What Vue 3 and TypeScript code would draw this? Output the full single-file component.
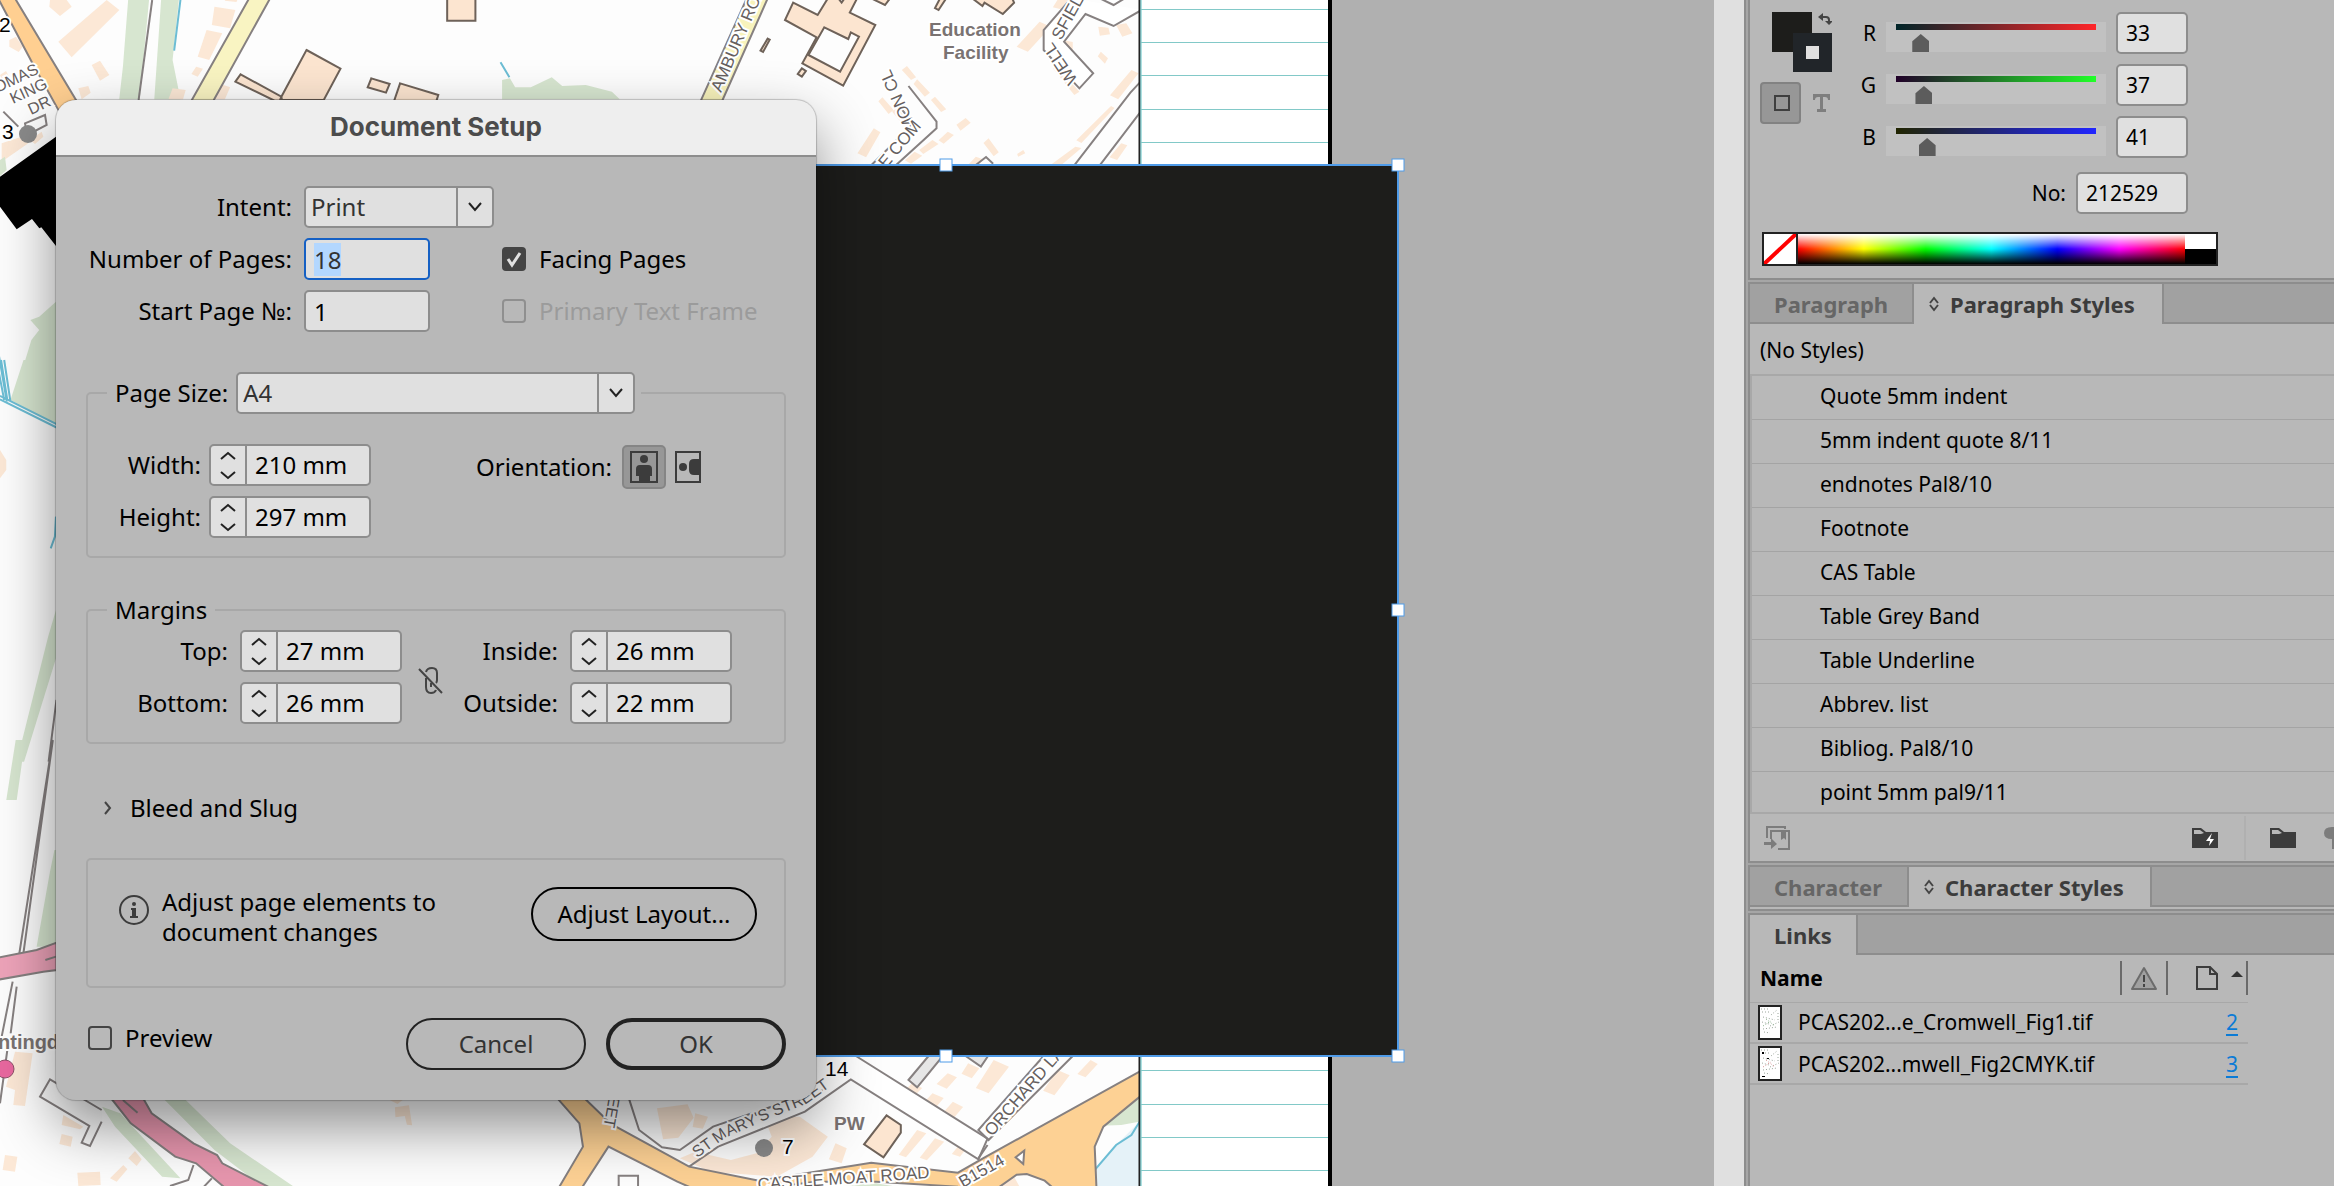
<script setup lang="ts">
import { onMounted, ref } from 'vue'

interface Channel { name: string; value: number; from: string; to: string }
interface Label { text: string; x: number; y: number; angle: number; size: number; bold?: boolean; dark?: boolean }

const channels = ref<Channel[]>([
  { name: 'R', value: 33, from: '#002529', to: '#ff2529' },
  { name: 'G', value: 37, from: '#210029', to: '#21ff29' },
  { name: 'B', value: 41, from: '#212500', to: '#2125ff' },
])

const paragraphStyles = [
  'Quote 5mm indent', '5mm indent quote 8/11', 'endnotes Pal8/10', 'Footnote', 'CAS Table',
  'Table Grey Band', 'Table Underline', 'Abbrev. list', 'Bibliog. Pal8/10', 'point 5mm pal9/11',
]

const links = [
  { name: 'PCAS202...e_Cromwell_Fig1.tif', page: 2 },
  { name: 'PCAS202...mwell_Fig2CMYK.tif', page: 3 },
]

const size = ref([
  { id: 'width', label: 'Width:', value: '210 mm' },
  { id: 'height', label: 'Height:', value: '297 mm' },
])
const margins = ref([
  [
    { id: 'top', label: 'Top:', value: '27 mm' },
    { id: 'bottom', label: 'Bottom:', value: '26 mm' },
  ],
  [
    { id: 'inside', label: 'Inside:', value: '26 mm' },
    { id: 'outside', label: 'Outside:', value: '22 mm' },
  ],
])

const baselines = Array.from({ length: 36 }, (_, i) => 9 + Math.round((i * 1161) / 35))

const handles = [
  { x: 946, y: 165 }, { x: 1398, y: 165 }, { x: 1398, y: 610 }, { x: 946, y: 1056 }, { x: 1398, y: 1056 },
]

const labels: Label[] = [
  { text: 'AMBURY ROAD', x: 721, y: 93, angle: -67, size: 17 },
  { text: 'Education', x: 929, y: 36, angle: 0, size: 19, bold: true },
  { text: 'Facility', x: 943, y: 59, angle: 0, size: 19, bold: true },
  { text: 'WELL', x: 1078, y: 80, angle: -124, size: 17 },
  { text: 'SFIELD', x: 1061, y: 41, angle: -61, size: 17 },
  { text: 'MON CL', x: 917, y: 129, angle: -114, size: 17 },
  { text: 'E COM', x: 886, y: 169, angle: -50, size: 17 },
  { text: 'OMAS', x: -3, y: 93, angle: -25, size: 16 },
  { text: 'KING', x: 13, y: 104, angle: -25, size: 16 },
  { text: 'DR', x: 31, y: 115, angle: -25, size: 16 },
  { text: '2', x: -1, y: 32, angle: 0, size: 21, dark: true },
  { text: '3', x: 2, y: 139, angle: 0, size: 21, dark: true },
  { text: 'ntingd', x: -2, y: 1049, angle: 0, size: 20, bold: true },
  { text: 'EET', x: 609, y: 1096, angle: 100, size: 16 },
  { text: '14', x: 825, y: 1076, angle: 0, size: 21, dark: true },
  { text: '7', x: 782, y: 1154, angle: 0, size: 21, dark: true },
  { text: 'PW', x: 834, y: 1130, angle: 0, size: 19, bold: true },
  { text: 'CASTLE MOAT ROAD', x: 758, y: 1190, angle: -4, size: 17 },
  { text: 'ORCHARD LA', x: 992, y: 1137, angle: -49, size: 17 },
  { text: 'B1514', x: 963, y: 1188, angle: -30, size: 17 },
]

const pagesField = ref<HTMLInputElement | null>(null)
const pages = ref('18')
const startPage = ref('1')
const hex = ref('212529')

onMounted(() => {
  pagesField.value?.focus()
  pagesField.value?.select()
})
</script>

<template>
  <div class="app">
    <main class="canvas">
      <svg class="artboard" width="1714" height="1186" viewBox="0 0 1714 1186" aria-label="Town map">
        <defs>
          <clipPath id="mapClip"><rect width="1139" height="1186" /></clipPath>
          <path id="stMarys" d="M697 1158 725 1138 770 1118 806 1104 842 1078" />
        </defs>
        <rect width="1328" height="1186" fill="#fff" />
        <g clip-path="url(#mapClip)" class="map">
          <rect width="1139" height="1186" fill="#fdfdfd" />

          <!-- north west -->
          <g transform="scale(.33333)">
            <path class="b" d="M150 0h50l15 20-35 28-32-28zM175 125 320 0l38 30-143 142zM275 195l25-13 28 43-28 17zM235 265l30-7 7 20-27 20zM28 120l20-10 20 30-12 16-28-16zM5 430l60-20 20 20-80 55zM90 420l35-25 5 15-25 22zM0 225l18-12 10 18-20 14z" />
            <path class="g" d="M0 480l15-10 5 40-20 18z" />
            <path class="r" fill="#ffcf91" d="M-40-70-10-110 48 0l180 300-50 35L95 185z" />
            <path class="l" d="M75 370l60-25 5 30-58 30zM10 335l45 45" />
            <path d="M0 530 168 410v328l-44-56-6 3-22-28-46 31L0 620z" />
          </g>
          <g transform="scale(.52301 .33333)">
            <path class="g" d="M245 0h40l-18 298h-39l7-98zM308 0h34l-12 180 15 118h-50zM960 240l15-5 10 27h30l40-30 20 26 45-3 50 20 15 23H960z" />
            <path class="b" d="M410 20l40 10-10 55-35-10zM395 90l30 10-25 80-22-10zM375 200l13 6-10 24-12-8zM330 265l25 5-5 28h-28zM418 250l22 12-10 36h-28zM430-20l30 0-8 26-22-4z" />
            <path class="l" d="M291 0 265 300" />
            <path class="w" d="M345 0l-12 152M957 187l17 45" />
            <path class="r" fill="#f9f4c2" d="M480-15 520-15 408 302H366z" />
            <path class="d" d="M586 150l65 56-32 94h-80l-1-10zM460 223l78 67-3 12h-10l-75-57zM710 235l35 17-7 26-35-16zM765 250l73 35-4 20h-81zM855-9h54v71h-54z" />
            <path class="g" d="M25 1200 60 1020l15-30-17-30 17-10 32-45v300z" />
            <path class="w" d="M-5 1040 13 1205M-8 1070 8 1200" />
          </g>

          <!-- west edge beside the dialog -->
          <g transform="translate(0 360) scale(.52301 .33333)">
            <path class="g" d="M45 0h70v200L20 120zM107 750 92 830 32 1205h14l65-330z" />
            <path class="w" d="M2 0l12 120M8 0l12 125M0 108l110 86M0 118l110 86M107 470l-2 60-8 35" />
            <path class="b" d="M0 270l12 30v30l-12 25z" />
            <path class="l" d="M108 1020 93 1205" />
          </g>
          <g transform="translate(0 740) scale(.52301 .33333)">
            <path class="g" d="M30 0h18L32 180H12zM104 330h8v290H70l25-220z" />
            <path class="l" d="M101 0 35 660M101 0 43 660" />
            <path class="g" d="M195 1100l35 20 115 195-35-5-90-150zM315 1080h40l85 130 120 128h-60l-90-108z" />
            <path class="b" d="M745 1080h25l-10 12zM755 1102l27-6 6 60-10-2-4-26-18 4z" />
            <path class="r" fill="#e796ae" d="M210 1070h62l18 50 80 90 45 35 10 25 100 80h-90l-60-80-40-20-85-100z" />
            <path class="l" d="M235 1080l28 38M370 1275l-10 45-35 18M405 1315l-15 25" />
          </g>
          <g transform="translate(0 880) scale(.33333)">
            <path class="r" fill="#eda3b9" d="M-5 233l115-23 60-22v82l-40 5-135 24z" />
            <path class="l" d="M168 230l-32 10M38 305 5 470M50 320 32 460M22 510 0 670" />
            <path class="b" d="M45 515l53 5-23 158-35-3 5-45-27-10zM190 705l60 35-10 8-55-13zM185 762l33 8-6 30-34-8zM15 825l37 5-7 45-37-5zM232 878l68-3 2 40-67 3zM330 895l40-40 12 13-32 37zM385 835l20-22 20 25-15 20z" />
            <path class="l" fill="#fafafa" d="M305 690 150 598l-30 52 148 88-23 50 25 10 35-73" />
          </g>

          <!-- north east -->
          <g transform="translate(560 0) scale(.5102 .33333)">
            <path class="b" d="M940 65l22 15-45 75-22-15zM975 0h25l-12 30-22-8zM1055 80l20 3 3 20-20 4zM1090 75l20-5 12 30-20 10zM1060 155l14 20-6 16-14-22zM985 120l20 6v40l15 25-14 10-20-40zM968 190l50 85-10 10-42-80zM1120 210l14 10-40 78-16-12zM1080 318l7 6-65 105-10-8zM1010 440l12 4-40 52-18-4zM1100 430l12 6-20 44-15-8zM680 198l18 34-10 8-18-30zM700 238l25 40-10 12-22-38zM735 290l22 38-10 8-20-36zM632 292l22 38-10 12-20-38zM660 322l25 48-12 5-22-40zM615 385l13 12-28 75-17-12zM795 354l10 14-20 24-8-18zM760 395l12 10-20 26-10-10zM730 420l12 12-30 30-8-12zM695 455l15 12-22 24-12-10zM840 415l20 42-10 12-20-40zM908 450l4 10-14 10-2-8zM815 470l14 8-8 18h-22z" />
            <path class="r" fill="#f8f3bc" d="M369-15H410L318 302H276z" />
            <path class="d" d="M457 8l48 37 22-55h16l9 18 8-18h24l-16 48 50 37-63 182-80-67 28-78-62-52zM407 116l4 3-13 37-5-4zM474 205l8 8-8 17-8-8zM610-5l27 20 10-20zM745-5h12l-15 35-7-6zM808-5l20 23 4-10 36 34 22-34-5-18z" />
            <path class="d hollow" d="M518 82l47 35 5-20 16 13-37 105-62-50z" />
            <path class="l" fill="#fff" d="M1002-5 948 90v60l70 115 27-45-57-95 42-83 55 36 55-48M1058-5l27 20 22-20" />
            <path class="l" d="M683 258l55 107v20L655 500M652 292l40 80-85 128M1138 245l-20 33-112 222M1138 335l-82 165M815 495l20-24 14 20" />
          </g>

          <!-- south east -->
          <g transform="translate(560 1030) scale(.5102 .33333)">
            <path class="b" d="M190 235l60-12 12 40-30 60-30 5zM265 250l25 10-10 36-20-5zM420 260l50 0 55 60-30 60-70 60-130-15-60-40 30-20 70 25 50-20 30-50-10-40zM540 340l22 15-10 45-25-12zM690 160l20 14-30 45-20-14zM730 190l22 14-24 44-24-14zM770 215l20 16-20 36-22-14zM700 300l18 10-40 72-14-8zM735 325l18 10-34 56-14-8zM790 330l14 10-20 40-16-8zM800 100l22 15-15 30-20-14zM850 90l30 20-40 80-25-16zM760 130l18 12-20 34-20-14zM975 120l24 16-30 60-22-14zM1040 90l14 12-24 40-16-10zM1025 310l14 12-45 84-14-10zM830 440l60 0 10 28h-80z" />
            <path class="g" d="M1012 240l48-40 75-55v130l-35 10-40 2zM560 468l60-8 40 10h-110z" />
            <path fill="#e5f2f8" d="M1136 275l-46 70-70 125h116z" />
            <path class="w" d="M1136 275l-16 40-30 30-70 125" />
            <path class="l" fill="#fff" d="M580 78l258 248-18 62L570 148l-90 97-170 105-57 60" />
            <path class="l" d="M135 205l20 95 45 52 35 8 65-70 95-50 120-60M99 205l-2 40" />
            <path class="r" fill="#fdd194" d="M-5 205 38 280 45 350-5 480h45L95 350l135 105 30 20h140l100-20h120l160 15 80 2 35-38 20-2 35 20 30 40h72l-4-142 17-60 175-220h-40L835 380l-55 48-170-30-220 54-137-42L100 282 48 205z" />
            <path class="l" d="M948 78 820 300l20 30 165-252M838 345l-18 40M115 470v-33h38v40" />
            <path class="l" fill="#fff" d="M910 362l-17 20 15 20z" />
            <path class="l" fill="#e6e6e6" d="M724 75h28l-52 97-17-22zM795 78l30 32 14-32" />
            <path class="d" d="M640 256l28 29v23l-34 74-38-39z" />
          </g>

          <circle cx="28" cy="134" r="9" fill="#8a8a8a" />
          <circle cx="764" cy="1148" r="9" fill="#8a8a8a" />
          <circle cx="5" cy="1069" r="9" fill="#e8689f" stroke="#8c5068" />
          <text
            v-for="l in labels"
            :key="l.text"
            :transform="`translate(${l.x} ${l.y}) rotate(${l.angle})`"
            :font-size="l.size"
            :class="['road', { bold: l.bold, dark: l.dark }]"
          >{{ l.text }}</text>
          <text class="road" font-size="16"><textPath href="#stMarys">ST MARY'S STREET</textPath></text>
        </g>
        <path d="M1139.5 0v1186" stroke="#222" stroke-width="2" />
        <path d="M1141 0v1186" stroke="#5cc3c6" stroke-width="1" />
        <path v-for="y in baselines" :key="y" :d="`M1141 ${y}.5H1328`" stroke="#82c9c8" />
        <path d="M1330 0v1186" stroke="#000" stroke-width="4" />
        <rect x="494" y="165" width="904" height="891" fill="#1d1d1b" stroke="#4f9be8" stroke-width="2" />
        <rect
          v-for="h in handles"
          :key="`${h.x}-${h.y}`"
          :x="h.x - 6"
          :y="h.y - 6"
          width="12"
          height="12"
          fill="#fff"
          stroke="#4f9be8"
        />
      </svg>

      <form class="dialog" role="dialog" aria-labelledby="dlgTitle" @submit.prevent>
        <h1 id="dlgTitle" class="dlg-title">Document Setup</h1>
        <div class="dlg-body">
          <div class="general">
            <label for="intent">Intent:</label>
            <div class="select intent">
              <select id="intent"><option>Print</option></select>
              <span class="arrow"><svg width="18" height="12" viewBox="0 0 18 12"><path d="M3 2l6 7 6-7" /></svg></span>
            </div>
            <span></span>

            <label for="pages">Number of Pages:</label>
            <input id="pages" ref="pagesField" v-model="pages" class="box focus" type="text" />
            <label class="check">
              <span class="tick"><input type="checkbox" checked /><svg width="24" height="24" viewBox="0 0 24 24"><path d="M6 12l4 6 8-12" /></svg></span>
              Facing Pages
            </label>

            <label for="start">Start Page №:</label>
            <input id="start" v-model="startPage" class="box" type="text" />
            <label class="check off"><span class="tick"><input type="checkbox" disabled /></span>Primary Text Frame</label>
          </div>

          <fieldset class="page-size">
            <legend>
              <span class="legend-row">
                <label for="psize">Page Size:</label>
                <span class="select psize">
                  <select id="psize"><option>A4</option></select>
                  <span class="arrow"><svg width="18" height="12" viewBox="0 0 18 12"><path d="M3 2l6 7 6-7" /></svg></span>
                </span>
              </span>
            </legend>
            <div class="split">
              <div class="fields narrow">
                <template v-for="f in size" :key="f.id">
                  <label :for="f.id">{{ f.label }}</label>
                  <div class="spinner">
                    <div class="steps">
                      <button type="button" :aria-label="`Increase ${f.id}`"><svg width="18" height="12" viewBox="0 0 18 12"><path d="M2 9l7-6 7 6" /></svg></button>
                      <button type="button" :aria-label="`Decrease ${f.id}`"><svg width="18" height="12" viewBox="0 0 18 12"><path d="M2 3l7 6 7-6" /></svg></button>
                    </div>
                    <input :id="f.id" v-model="f.value" type="text" />
                  </div>
                </template>
              </div>
              <div class="orient">
                <span>Orientation:</span>
                <button type="button" class="on" aria-label="Portrait">
                  <svg width="28" height="32" viewBox="0 0 28 32"><rect x="1" y="1" width="26" height="30" fill="none" stroke="#3c3c3c" stroke-width="2" /><circle cx="14" cy="8" r="4" fill="#3c3c3c" /><path d="M6 18q0-4 4-4h8q4 0 4 4v7h-2v6H9v-6H6z" fill="#3c3c3c" /></svg>
                </button>
                <button type="button" aria-label="Landscape">
                  <svg width="26" height="32" viewBox="0 0 26 32"><rect x="1" y="1" width="24" height="30" fill="none" stroke="#3c3c3c" stroke-width="2" /><circle cx="8" cy="16" r="4" fill="#3c3c3c" /><path d="M25 8h-6q-5 0-5 5v6q0 5 5 5h6z" fill="#3c3c3c" /></svg>
                </button>
              </div>
            </div>
          </fieldset>

          <fieldset class="margins">
            <legend>Margins</legend>
            <div class="split">
              <template v-for="(group, gi) in margins" :key="gi">
                <div class="fields" :class="{ right: gi === 1 }">
                  <template v-for="f in group" :key="f.id">
                    <label :for="f.id">{{ f.label }}</label>
                    <div class="spinner">
                      <div class="steps">
                        <button type="button" :aria-label="`Increase ${f.id}`"><svg width="18" height="12" viewBox="0 0 18 12"><path d="M2 9l7-6 7 6" /></svg></button>
                        <button type="button" :aria-label="`Decrease ${f.id}`"><svg width="18" height="12" viewBox="0 0 18 12"><path d="M2 3l7 6 7-6" /></svg></button>
                      </div>
                      <input :id="f.id" v-model="f.value" type="text" />
                    </div>
                  </template>
                </div>
                <button v-if="gi === 0" type="button" class="chain" aria-label="Make all settings the same">
                  <svg width="26" height="30" viewBox="0 0 26 30"><path d="M8 6q1-4 6-4 5 0 5 5v7q0 2-1 3M8 12v9q0 6 5 6 4 0 5-3M13 17v4M1 3l23 24" fill="none" stroke="#444" stroke-width="2" /></svg>
                </button>
              </template>
            </div>
          </fieldset>

          <button type="button" class="disclosure">
            <svg width="8" height="14" viewBox="0 0 8 14"><path d="M1 1l5 6-5 6" /></svg>Bleed and Slug
          </button>

          <section class="adjust">
            <svg width="32" height="32" viewBox="0 0 32 32"><circle cx="16" cy="16" r="14" fill="none" stroke="#3c3c3c" stroke-width="2" /><circle cx="16" cy="10" r="2" fill="#3c3c3c" /><path d="M13 14h5v8h2v2h-8v-2h2v-6h-1z" fill="#3c3c3c" /></svg>
            <p>Adjust page elements to<br />document changes</p>
            <button type="button" class="pill">Adjust Layout...</button>
          </section>

          <div class="actions">
            <label class="check preview"><span class="tick"><input type="checkbox" /></span>Preview</label>
            <button type="button" class="pill cancel">Cancel</button>
            <button type="submit" class="pill ok">OK</button>
          </div>
        </div>
      </form>
    </main>

    <div class="scrollbar"></div>

    <aside class="dock">
      <section class="colour">
        <div class="swatches">
          <svg width="72" height="112" viewBox="0 0 72 112" aria-hidden="true">
            <path fill="#1d1d1b" d="M12 0h40v40H12z" />
            <path fill="#212529" fill-rule="evenodd" d="M33 21h39v39H33zM46 34v13h13V34z" />
            <path fill="#e0e0e0" d="M46 34h13v13H46z" />
            <path d="M61 5h5q3 0 3 3v4" fill="none" stroke="#444" stroke-width="2" />
            <path fill="#444" d="M58 5l5-4v8zM65 9h8l-4 4z" />
            <rect x="1" y="71" width="39" height="40" rx="3" fill="#979797" stroke="#828282" stroke-width="2" />
            <rect x="15" y="84" width="14" height="14" fill="none" stroke="#3f3f3f" stroke-width="2" />
            <path fill="#7e7e7e" d="M53 82h17v6h-2q0-3-3-3h-2v12h3v3h-9v-3h3V85h-2q-3 0-3 3h-2z" />
          </svg>
        </div>
        <div class="mixer">
          <div v-for="c in channels" :key="c.name" class="channel">
            <label :for="`ch${c.name}`">{{ c.name }}</label>
            <input
              v-model.number="c.value"
              type="range"
              min="0"
              max="255"
              :aria-label="`${c.name} level`"
              :style="{ backgroundImage: `linear-gradient(90deg, ${c.from}, ${c.to})` }"
            />
            <input :id="`ch${c.name}`" v-model="c.value" class="box num" type="text" />
          </div>
          <div class="channel hexrow">
            <label for="hex">No:</label>
            <input id="hex" v-model="hex" class="box hex" type="text" />
          </div>
        </div>
        <div class="spectrum">
          <svg class="none" width="32" height="30" viewBox="0 0 32 30"><path fill="#fff" d="M0 0h32v30H0z" /><path d="M0 30 32 0" stroke="#f00" stroke-width="4" /></svg>
          <div class="rainbow"></div>
          <div class="bw"></div>
        </div>
      </section>

      <section class="panel">
        <nav class="tabs">
          <button type="button">Paragraph</button>
          <button type="button" class="active"><svg width="11" height="16" viewBox="0 0 11 16"><path d="M1 7l4-5 4 5M1 9l4 5 4-5" /></svg>Paragraph Styles</button>
        </nav>
        <div class="current">(No Styles)</div>
        <ul class="styles">
          <li v-for="s in paragraphStyles" :key="s">{{ s }}</li>
        </ul>
        <div class="tools">
          <button type="button" aria-label="Load styles"><svg width="26" height="26" viewBox="0 0 26 26"><path d="M3 13V2h18v2M7 14V6h18v18H14" fill="none" stroke="#7c7c7c" stroke-width="2" /><path d="M17 6h5v9l-2-2-3 2zM0 17h7v-4l6 6-6 5v-4H0z" fill="#7c7c7c" /></svg></button>
          <span class="grow"></span>
          <button type="button" aria-label="Style group from cloud"><svg width="26" height="20" viewBox="0 0 26 20"><path fill="#3c3c3c" d="M0 0h9l5 4h12v16H0z" /><path fill="#b8b8b8" d="M2 2h6l4 3-3 1H2z" /><path fill="#fff" d="M20 5l-6 8h4l-1 5 5-7h-4z" /></svg></button>
          <span class="sep"></span>
          <button type="button" aria-label="New style group"><svg width="26" height="20" viewBox="0 0 26 20"><path fill="#3c3c3c" d="M0 0h9l5 4h12v16H0z" /><path fill="#b8b8b8" d="M2 2h6l4 3-3 1H2z" /></svg></button>
          <span class="clip"><svg width="26" height="22" viewBox="0 0 26 22"><path fill="#7c7c7c" d="M8 0h12v22h-2V2h-3v20h-7V12Q0 12 0 6t8-6z" /></svg></span>
        </div>
      </section>

      <section class="panel closed">
        <nav class="tabs">
          <button type="button" class="char">Character</button>
          <button type="button" class="active"><svg width="11" height="16" viewBox="0 0 11 16"><path d="M1 7l4-5 4 5M1 9l4 5 4-5" /></svg>Character Styles</button>
        </nav>
      </section>

      <section class="panel last">
        <nav class="tabs"><button type="button" class="active solo">Links</button></nav>
        <table class="links">
          <thead>
            <tr>
              <th class="name">Name</th>
              <th class="status"><span><svg width="26" height="24" viewBox="0 0 26 24"><path d="M13 2 25 23H1z" fill="#a0a0a0" stroke="#6c6c6c" stroke-width="2" stroke-linejoin="round" /><path d="M13 9v7M13 18v3" stroke="#444" stroke-width="2" /></svg></span></th>
              <th class="page"><span><svg width="22" height="24" viewBox="0 0 22 24"><path d="M1 1h13l7 7v15H1zM14 1v7h7" fill="none" stroke="#3c3c3c" stroke-width="2" /></svg><svg class="asc" width="12" height="6" viewBox="0 0 12 6"><path d="M0 6l6-6 6 6z" fill="#333" /></svg></span></th>
            </tr>
          </thead>
          <tbody>
            <tr v-for="(l, i) in links" :key="l.name">
              <td class="name" colspan="2">
                <span class="file">
                  <svg width="24" height="35" viewBox="0 0 24 35">
                    <rect x="1" y="1" width="22" height="33" fill="#fff" stroke="#222" stroke-width="2" />
                    <path d="M3 4h9M4 7h7M13 10l6-5M5 12l12 3M4 17l7 2M12 21l9-4M5 24l14-2M6 27l6 1M20 8v7" stroke="#9aa59a" stroke-dasharray="1 2" fill="none" />
                    <path d="M8 14l9 7M5 21l8-5" :stroke="i ? '#d58a8a' : '#82ac86'" stroke-dasharray="1 2" />
                    <path v-if="i" d="M4 6h2v2H4zM9 12h2v1H9zM4 30h3v1H4z" />
                  </svg>
                  {{ l.name }}
                </span>
              </td>
              <td class="page"><a href="#">{{ l.page }}</a></td>
            </tr>
          </tbody>
        </table>
      </section>
    </aside>
  </div>
</template>

<style>
body { margin: 0; overflow: hidden; }
</style>

<style scoped>
* { box-sizing: border-box; }
.app { display: flex; height: 100vh; font: 24px/28px "Noto Sans", sans-serif; color: #000; background: #b0b0b0; }
button, input, select { font: inherit; color: inherit; margin: 0; padding: 0; border: 0; background: none; border-radius: 0; outline: none; }
p, ul, h1 { margin: 0; padding: 0; }
svg { display: block; flex: none; }

.canvas { flex: 1; position: relative; overflow: hidden; min-width: 0; }
.artboard { position: absolute; top: 0; left: 0; }
.map path { vector-effect: non-scaling-stroke; }
.b { fill: #fce8d6; }
.g { fill: #d7e6d0; }
.l { stroke: #868080; stroke-width: 2; }
.l:not([fill]) { fill: none; }
.r { stroke: #868080; stroke-width: 2; }
.w { stroke: #6cbdd4; stroke-width: 2; fill: none; }
.d { fill: #fce5d0; stroke: #6e6259; stroke-width: 2; }
.hollow { fill: #fdfdfd; }
.road { font-family: "Liberation Sans", sans-serif; fill: #665f5f; stroke: #fff; stroke-width: 4; paint-order: stroke; }
.road.bold { font-weight: bold; fill: #7a7372; }
.road.dark { fill: #000; }

.dialog { position: absolute; left: 56px; top: 100px; width: 760px; border-radius: 20px; overflow: hidden; background: #b8b8b8; box-shadow: 0 0 1px 1px rgba(0, 0, 0, .2), 0 26px 60px 0 rgba(0, 0, 0, .45); }
.dlg-title { height: 57px; background: #eee; border-bottom: 2px solid #8d8d8d; font: bold 26px/54px Inter, sans-serif; color: #4c4c4c; text-align: center; }
.dlg-body { padding: 29px 30px 30px; }

.general { display: grid; grid-template-columns: 206px 190px 1fr; column-gap: 12px; row-gap: 10px; align-items: center; }
.general > label:not(.check) { text-align: right; }
.box { height: 42px; border: 2px solid #8d8d8d; border-radius: 5px; background: #e0e0e0; padding: 0 8px; }
.general .box { width: 126px; }
.box.focus { border-color: #1560c4; color: #333; }
.box::selection { background: #b3d7ff; color: #333; }
.check { display: flex; align-items: center; gap: 13px; }
.general .check { margin-left: -4px; }
.tick { display: grid; width: 24px; height: 24px; }
.tick > * { grid-area: 1 / 1; }
.tick input { appearance: none; width: 24px; height: 24px; border: 2px solid #444; border-radius: 4px; }
.tick input:checked { background: #444; }
.tick svg { fill: none; stroke: #e0e0e0; stroke-width: 3; pointer-events: none; }
.off { color: #9b9b9b; }
.off .tick input { border-color: #8f8f8f; }

.select { display: grid; height: 42px; border: 2px solid #8d8d8d; border-radius: 5px; background: #e0e0e0; }
.select > * { grid-area: 1 / 1; }
.select select { appearance: none; padding: 0 44px 0 5px; color: #333; }
.arrow { justify-self: end; width: 36px; border-left: 2px solid #8d8d8d; display: flex; align-items: center; justify-content: center; pointer-events: none; }
.arrow path, .steps path { fill: none; stroke: #222; stroke-width: 2; }
.psize { width: 399px; }

fieldset { margin: 0; min-width: 0; border: 2px solid #a8a8a8; border-radius: 5px; padding: 0 0 18px; }
.page-size { margin-top: 40px; }
.page-size legend { margin-left: 19px; padding: 0 6px 0 8px; }
.legend-row { display: flex; align-items: center; gap: 8px; }
.page-size .split { margin-top: 30px; }
.margins { margin-top: 38px; }
.margins legend { margin-left: 19px; padding: 0 8px; }
.margins .split { margin-top: 6px; }
.split { display: flex; align-items: flex-start; }
.fields { display: grid; grid-template-columns: 140px 162px; column-gap: 12px; row-gap: 10px; align-items: center; }
.fields > label { text-align: right; }
.fields.narrow { grid-template-columns: 113px 162px; column-gap: 8px; }
.fields.right { grid-template-columns: 114px 162px; }
.spinner { display: flex; height: 42px; border: 2px solid #8d8d8d; border-radius: 5px; background: #e0e0e0; overflow: hidden; }
.steps { width: 36px; border-right: 2px solid #8d8d8d; display: flex; flex-direction: column; flex: none; }
.steps button { flex: 1; display: flex; align-items: center; justify-content: center; }
.spinner input { min-width: 0; flex: 1; padding: 0 8px; }
.orient { display: flex; align-items: center; margin: 1px 0 0 auto; padding-right: 74px; }
.orient button { height: 44px; width: 44px; display: flex; align-items: center; justify-content: center; }
.orient .on { margin-left: 10px; background: #979797; border: 2px solid #858585; border-radius: 5px; }
.chain { margin: 36px 0 0 16px; width: 26px; }

.disclosure { display: flex; align-items: center; gap: 18px; margin: 50px 0 36px; padding-left: 18px; }
.disclosure path, .tabs path { fill: none; stroke: #444; stroke-width: 2; }
.adjust { display: flex; align-items: flex-start; height: 130px; padding: 27px 27px 0 30px; border: 2px solid #a8a8a8; border-radius: 5px; }
.adjust > svg { margin-top: 7px; }
.adjust p { flex: 1; margin-left: 12px; line-height: 30px; }
.pill { width: 226px; height: 54px; border: 2px solid #000; border-radius: 27px; }
.actions { display: flex; align-items: center; gap: 20px; margin-top: 30px; }
.preview { flex: 1; padding-left: 2px; margin-top: -12px; }
.actions .pill { width: 180px; height: 52px; border-color: #222; color: #333; }
.actions .ok { border-width: 4px; }

.scrollbar { width: 30px; background: #e0e0e0; }
.dock { width: 590px; flex: none; display: flex; flex-direction: column; background: #a6a6a6; border-left: 2px solid #8d8d8d; padding-left: 2px; font-size: 21px; overflow: hidden; }
.colour { background: #b8b8b8; border-left: 2px solid #8d8d8d; border-bottom: 2px solid #8d8d8d; display: grid; grid-template-columns: 136px 302px; padding: 12px 0 12px 10px; }
.mixer { display: flex; flex-direction: column; gap: 10px; margin-left: -36px; width: 338px; }
.channel { display: flex; align-items: center; height: 42px; gap: 10px; width: 328px; }
.channel label { width: 16px; text-align: right; }
.channel input[type=range] { appearance: none; width: 220px; height: 30px; margin-top: 8px; background: #c1c1c1 no-repeat 10px 2px / 200px 6px; }
.channel input[type=range]::-webkit-slider-thumb { appearance: none; width: 17px; height: 18px; margin-top: 12px; background: #5c5c5c; clip-path: polygon(50% 0, 100% 40%, 100% 100%, 0 100%, 0 40%); }
.box.num { width: 72px; }
.hexrow { justify-content: flex-end; margin-top: 4px; }
.hexrow label { width: auto; }
.box.hex { width: 112px; }
.spectrum { grid-column: 1 / -1; margin: 18px 0 0 2px; width: 456px; height: 34px; border: 2px solid #222; display: flex; }
.rainbow { flex: 1; border-left: 2px solid #222; background: linear-gradient(180deg, #fff 0, rgba(255, 255, 255, 0) 50%, rgba(0, 0, 0, 0) 50%, #000 100%), linear-gradient(90deg, #f00, #ff0 17%, #0f0 33%, #0ff 50%, #00f 67%, #f0f 83%, #f00); }
.bw { width: 31px; background: linear-gradient(#fff 50%, #000 50%); }

.panel { margin-top: 2px; border: 2px solid #8d8d8d; border-right: 0; background: #b8b8b8; }
.tabs { display: flex; background: #a1a1a1; height: 40px; box-shadow: inset 0 -2px #8d8d8d; font-weight: bold; }
.tabs button { width: 164px; padding-left: 24px; text-align: left; color: #666; border-right: 2px solid #8d8d8d; font-size: 22px; white-space: nowrap; }
.tabs button.char { width: 159px; }
.tabs .active { width: 250px; padding-left: 15px; display: flex; align-items: center; gap: 10px; background: #b8b8b8; color: #3c3c3c; }
.tabs .char + .active { width: 243px; }
.tabs .solo { width: 108px; padding-left: 24px; }
.current { height: 50px; padding: 12px 10px 0; }
.styles { list-style: none; border: 2px solid #a8a8a8; border-right: 0; height: 440px; }
.styles li { height: 44px; line-height: 40px; padding-left: 68px; border-bottom: 1px solid #a4a4a4; }
.styles li:last-child { border: 0; }
.tools { height: 47px; display: flex; align-items: center; padding-left: 14px; }
.grow { flex: 1; }
.sep { width: 2px; height: 44px; margin: 0 24px 0 26px; background: #b0b0b0; }
.clip { width: 10px; margin-left: 28px; overflow: hidden; }
.closed { padding-bottom: 2px; }
.last { flex: 1; border-bottom: 0; }

.links { border-collapse: collapse; width: 498px; table-layout: fixed; }
.links th { height: 47px; padding: 0; text-align: left; border-bottom: 1px solid #a8a8a8; }
.links th.name { width: 370px; padding-left: 10px; }
.links th span { display: flex; align-items: center; height: 34px; }
.status { width: 48px; }
.links .status span { border-left: 2px solid #6a6a6a; border-right: 2px solid #6a6a6a; justify-content: center; }
.links th.page span { border-right: 2px solid #6a6a6a; padding-left: 28px; }
.asc { margin: 0 0 8px 13px; }
.links td { height: 41px; padding: 0; border-bottom: 2px solid #a8a8a8; }
.links td.name { padding-left: 8px; }
.file { display: flex; align-items: center; gap: 16px; }
.links td.page { text-align: right; padding-right: 10px; }
.links a { color: #0b7bd6; text-decoration: underline; text-underline-offset: 4px; text-decoration-thickness: 2px; }
</style>
